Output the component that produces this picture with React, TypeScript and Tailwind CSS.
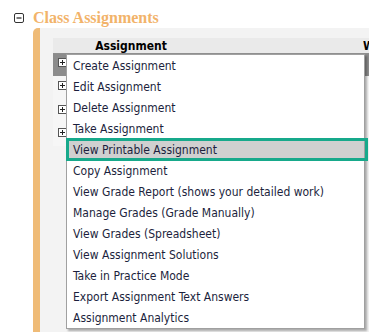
import React from "react";

const items = [
  "Create Assignment",
  "Edit Assignment",
  "Delete Assignment",
  "Take Assignment",
  "View Printable Assignment",
  "Copy Assignment",
  "View Grade Report (shows your detailed work)",
  "Manage Grades (Grade Manually)",
  "View Grades (Spreadsheet)",
  "View Assignment Solutions",
  "Take in Practice Mode",
  "Export Assignment Text Answers",
  "Assignment Analytics",
];

function PlusBox() {
  return (
    <svg width="9" height="9" viewBox="0 0 9 9" className="block">
      <rect x="0.5" y="0.5" width="8" height="8" fill="#fff" stroke="#555" />
      <path d="M2 4.5h5M4.5 2v5" stroke="#222" strokeWidth="1" />
    </svg>
  );
}

function MinusBox() {
  return (
    <svg width="10" height="10" viewBox="0 0 10 10" className="block">
      <rect x="0.5" y="0.5" width="9" height="9" rx="1.5" fill="#fff" stroke="#333" />
      <path d="M2.5 5h5" stroke="#222" strokeWidth="1.2" />
    </svg>
  );
}

export default function App() {
  const menuFont = { fontFamily: '"DejaVu Sans Condensed", "DejaVu Sans", sans-serif' };
  return (
    <div className="relative w-[369px] h-[332px] overflow-hidden bg-white">
      <div className="flex items-center h-[28px] pl-[14px] pt-[8px]">
        <MinusBox />
        <span
          className="ml-[9px] text-[16px] font-bold text-[#f2b36a] leading-none"
          style={{ fontFamily: '"Liberation Serif", serif' }}
        >
          Class Assignments
        </span>
      </div>
      <div className="flex ml-[33px] h-[304px]">
        <div className="w-[7px] bg-[#efbb77] rounded-tl-[5px]" />
        <div className="flex-1 bg-[#f3f3f3] pl-[13px] pt-[10px]">
          <div className="flex flex-col" style={menuFont}>
            <div className="flex h-[16px] bg-[#eaeaea] border-b border-[#8f8f8f] items-center text-[12px] font-bold text-black">
              <div className="w-[156px] text-center">Assignment</div>
              <div className="ml-auto w-[6px] overflow-hidden">W</div>
            </div>
            <div className="h-[22px] bg-[#8c8c8c] flex pl-[5px] pt-[4px]">
              <PlusBox />
            </div>
            <div className="h-[24px] flex pl-[5px] pt-[5px] bg-[#f6f6f6]">
              <PlusBox />
            </div>
            <div className="h-[24px] flex pl-[5px] pt-[5px] bg-[#f6f6f6]">
              <PlusBox />
            </div>
            <div className="h-[22px] flex pl-[5px] pt-[4px] bg-[#f6f6f6]">
              <PlusBox />
            </div>
          </div>
        </div>
      </div>

      <div
        className="absolute left-[66px] top-[54px] w-[299px] bg-white border border-[#a0a0a0] shadow-[2px_2px_2px_rgba(0,0,0,0.3)]"
        style={menuFont}
      >
        {items.map((t, i) => (
          <div
            key={t}
            className={
              "relative h-[21px] flex items-center pl-[6px] text-[12px] text-[#1c1f3d] whitespace-nowrap " +
              (i === 4 ? "bg-[#d0d0d0]" : "")
            }
          >
            {i === 4 && (
              <span className="absolute left-[-1px] right-[-4px] top-[-1px] bottom-[-1px] border-[3px] border-[#17a98b]" />
            )}
            <span className="relative">{t}</span>
          </div>
        ))}
      </div>
    </div>
  );
}
